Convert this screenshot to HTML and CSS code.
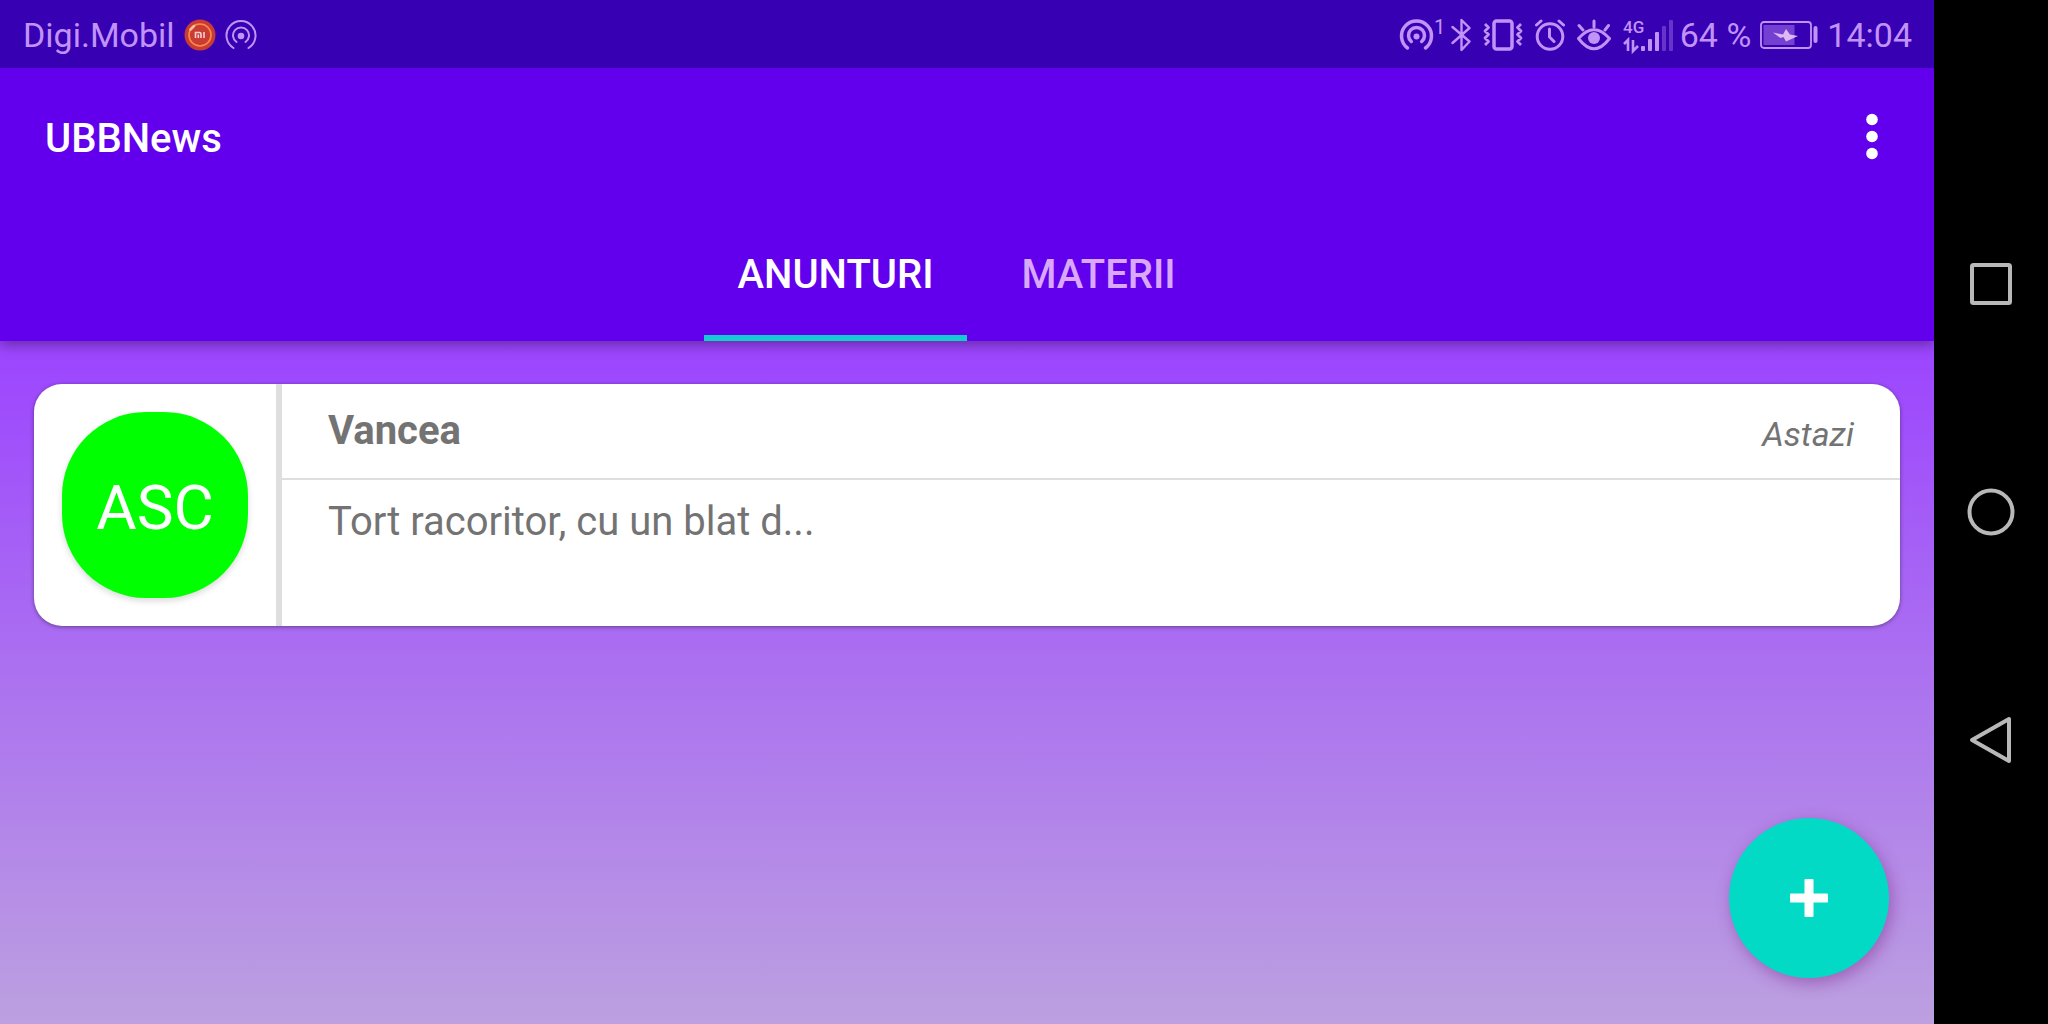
FILE: index.html
```html
<!DOCTYPE html>
<html lang="ro">
<head>
<meta charset="utf-8">
<meta name="viewport" content="width=device-width, initial-scale=1">
<title>UBBNews</title>
<link rel="stylesheet" href="styles.css">
</head>
<body>
<div class="screen">
  <div class="status-bar">
    <div class="status-group status-left">
      <span>Digi.Mobil</span>
      <svg class="mi-icon" width="32" height="32" viewBox="0 0 32 32" aria-hidden="true">
        <circle cx="16" cy="16" r="15.5" fill="#c83c35"/>
        <circle cx="16" cy="16" r="11" fill="none" stroke="#ff8a45" stroke-width="1.6"/>
        <path d="M6.500 10.500l3.500-3.500" stroke="#ffc09a" stroke-width="2.500" stroke-linecap="round"/>
        <path d="M11.500 19v-5.500h4q1.500 0 1.500 1.500v4M14.300 15.500V19M20 13v6" fill="none" stroke="#fbd0c8" stroke-width="1.600"/>
      </svg>
      <svg width="32" height="30" viewBox="0 0 32 30" fill="none" stroke="#c193f8" stroke-width="2" stroke-linecap="round" aria-hidden="true">
        <path d="M8.500 28A14.500 14.500 0 1 1 23.500 28M11.500 22A8 8 0 1 1 20.500 22"/>
        <circle cx="16" cy="16" r="3.300" fill="#c193f8" stroke="none"/>
      </svg>
    </div>
    <div class="status-group status-right">
      <svg width="40" height="32" viewBox="0 0 40 32" overflow="visible" fill="none" stroke="#c193f8" stroke-width="3.500" stroke-linecap="round" aria-hidden="true">
        <path d="M8.500 29A15 15 0 1 1 26.500 29M12.300 22.500A8 8 0 1 1 22.700 22.500"/>
        <circle cx="17.500" cy="17.500" r="3" fill="#c193f8" stroke="none"/>
        <text class="tiny-text" x="35" y="15">1</text>
      </svg>
      <svg width="20" height="34" viewBox="0 0 20 34" fill="none" stroke="#c193f8" stroke-width="2.400" stroke-linejoin="round" stroke-linecap="round" aria-hidden="true">
        <path d="M1.500 9L18.500 23.500 10.500 32V2L18.500 10 1.500 25"/>
      </svg>
      <svg width="40" height="32" viewBox="0 0 40 32" fill="none" stroke="#c193f8" stroke-width="3.500" stroke-linejoin="round" aria-hidden="true">
        <rect x="11" y="2" width="18" height="28" rx="2.500"/>
        <path stroke-width="2.800" d="M2 5l3.500 3.500L2 12l3.500 3.500L2 19l3.500 3.500L2 26M38 5l-3.500 3.500L38 12l-3.500 3.500L38 19l-3.500 3.500L38 26"/>
      </svg>
      <svg width="30" height="32" viewBox="0 0 30 32" fill="none" stroke="#c193f8" stroke-width="3" stroke-linecap="round" aria-hidden="true">
        <circle cx="15" cy="17.500" r="12.800"/>
        <path d="M14.500 10v8l4.500 4.500M1.500 6L6 2M28.500 6L24 2"/>
      </svg>
      <svg width="34" height="32" viewBox="0 0 34 32" fill="none" stroke="#c193f8" stroke-width="3" stroke-linecap="round" stroke-linejoin="round" aria-hidden="true">
        <path d="M1.500 19.500Q17 2 32.500 19.500Q17 40 1.500 19.500Z"/>
        <path d="M17 8V2M6 11L2 6.500M28 11L31.500 6.500"/>
        <circle cx="17" cy="19" r="6" fill="#c193f8" stroke="none"/>
      </svg>
      <svg width="50" height="32" viewBox="0 0 50 32" overflow="visible" fill="#c193f8" aria-hidden="true">
        <text class="tiny-text tiny-bold" x="0" y="14">4G</text>
        <path d="M1 25l4-4v11M10 21v11l5-5" fill="none" stroke="#c193f8" stroke-width="2.600"/>
        <rect x="18" y="27" width="4" height="5" rx="1"/>
        <rect x="25" y="20" width="4" height="12" rx="1"/>
        <rect x="32" y="13" width="4" height="19" rx="1"/>
        <rect x="39" y="7" width="4" height="25" rx="1" opacity=".35"/>
        <rect x="46" y="1" width="4" height="31" rx="1" opacity=".35"/>
      </svg>
      <span class="battery">
        <span>64 %</span>
        <svg width="58" height="28" viewBox="0 0 58 28" aria-hidden="true">
          <rect x="1" y="1" width="50" height="26" rx="3" fill="none" stroke="#c193f8" stroke-width="1.800"/>
          <rect x="3.500" y="4" width="31" height="20" fill="#7440d2"/>
          <path d="M13 11.500l10 2 3-5.500 4 5.500 8 1.500-12 5.500-2.500-4.500-3 1z" fill="#dcb9f5"/>
          <rect x="53.500" y="5" width="4" height="17" rx="2" fill="#c193f8"/>
        </svg>
        <span>14:04</span>
      </span>
    </div>
  </div>

  <header class="app-bar">
    <div class="toolbar">
      <h1 class="title">UBBNews</h1>
      <button class="overflow" aria-label="Mai multe">
        <svg width="12" height="48" viewBox="0 0 12 48" fill="#fff"><circle cx="6" cy="6.500" r="5.800"/><circle cx="6" cy="23.500" r="5.800"/><circle cx="6" cy="40.500" r="5.800"/></svg>
      </button>
    </div>
    <div class="tabs" role="tablist">
      <button class="tab tab-active" role="tab" aria-selected="true">ANUNTURI</button>
      <button class="tab" role="tab" aria-selected="false">MATERII</button>
    </div>
  </header>

  <main class="content">
    <article class="card">
      <div class="card-side"><div class="badge">ASC</div></div>
      <div class="card-main">
        <div class="card-head">
          <h2 class="author">Vancea</h2>
          <em class="date">Astazi</em>
        </div>
        <p class="excerpt">Tort racoritor, cu un blat d...</p>
      </div>
    </article>
    <button class="fab" aria-label="Adauga">
      <svg width="38" height="38" viewBox="0 0 38 38" fill="#fff"><rect x="14.500" y="0" width="9" height="38" rx="1"/><rect x="0" y="14.500" width="38" height="9" rx="1"/></svg>
    </button>
  </main>
</div>

<nav class="system-nav">
  <button class="nav-button" aria-label="Recente">
    <svg width="48" height="48" viewBox="0 0 48 48"><rect x="5" y="5" width="38" height="38" rx="1.500"/></svg>
  </button>
  <button class="nav-button" aria-label="Acasa">
    <svg width="48" height="48" viewBox="0 0 48 48"><circle cx="24" cy="24" r="21.500"/></svg>
  </button>
  <button class="nav-button" aria-label="Inapoi">
    <svg width="48" height="48" viewBox="0 0 48 48"><path d="M5 24L42 3V45Z"/></svg>
  </button>
</nav>
</body>
</html>
```
FILE: styles.css
```css
* {
  box-sizing: border-box;
}

body {
  margin: 0;
  min-height: 100vh;
  display: flex;
  background: #000;
  font-family: Roboto, "Noto Sans", sans-serif;
}

button {
  border: 0;
  padding: 0;
  background: none;
  font: inherit;
  cursor: pointer;
}

svg {
  display: block;
  flex: none;
}

.screen {
  flex: 1;
  min-width: 0;
  display: flex;
  flex-direction: column;
}

/* Status bar */

.status-bar {
  display: flex;
  justify-content: space-between;
  height: 68px;
  padding: 2px 22px 0 23px;
  background: #3700b3;
  color: #c193f8;
  font-size: 34px;
  line-height: 40px;
  white-space: nowrap;
}

.status-group,
.battery {
  display: flex;
  align-items: center;
}

.status-left {
  gap: 9px;
}

.status-right {
  gap: 12px;
}

.battery {
  gap: 9px;
  margin-left: -5px;
}

.tiny-text {
  fill: #c193f8;
  stroke: none;
  font-size: 20px;
}

.tiny-bold {
  font-size: 17px;
  font-weight: 500;
}

/* App bar */

.app-bar {
  position: relative;
  background: #6200ee;
  color: #fff;
  box-shadow: 0 4px 12px rgba(0, 0, 0, 0.35);
  clip-path: inset(0 0 -24px 0);
}

.toolbar {
  display: flex;
  align-items: center;
  justify-content: space-between;
  height: 138px;
  padding: 0 39px 0 45px;
}

.title {
  margin: 0;
  padding-top: 3px;
  font-size: 40px;
  font-weight: 500;
  line-height: 48px;
}

.overflow {
  width: 46px;
  height: 96px;
  display: flex;
  align-items: center;
  justify-content: center;
}

.tabs {
  display: flex;
  justify-content: center;
}

.tab {
  width: 263px;
  height: 135px;
  border-top: 8px solid transparent;
  border-bottom: 6px solid transparent;
  color: #d9a8fb;
  font-size: 40px;
  font-weight: 500;
}

.tab-active {
  border-bottom-color: #14cbd2;
  color: #fff;
}

/* Announcements */

.content {
  flex: 1;
  display: flex;
  flex-direction: column;
  justify-content: space-between;
  gap: 40px;
  padding: 43px 34px 46px;
  background: linear-gradient(#9c44ff, #bca0e0);
}

.card {
  display: flex;
  min-height: 242px;
  border-radius: 28px;
  overflow: hidden;
  background: #fff;
  color: #737373;
  box-shadow: 0 1px 4px rgba(0, 0, 0, 0.4);
}

.card-side {
  display: flex;
  align-items: center;
  padding: 0 28px;
  border-right: 6px solid #dedede;
}

.badge {
  width: 186px;
  height: 186px;
  padding-top: 3px;
  border-radius: 84px;
  background: #0f0;
  color: #fff;
  font-size: 62px;
  line-height: 186px;
  text-align: center;
  box-shadow: 0 3px 6px rgba(0, 0, 0, 0.15);
}

.card-main {
  flex: 1;
  min-width: 0;
}

.card-head {
  display: flex;
  align-items: center;
  justify-content: space-between;
  height: 96px;
  padding: 0 46px;
  border-bottom: 2px solid #dedede;
}

.author {
  margin: 0;
  font-size: 40px;
  font-weight: 700;
  line-height: 48px;
}

.date {
  padding-top: 5px;
  font-size: 34px;
  line-height: 40px;
}

.excerpt {
  margin: 0;
  padding: 18px 46px;
  font-size: 40px;
  line-height: 48px;
}

.fab {
  align-self: flex-end;
  display: flex;
  align-items: center;
  justify-content: center;
  width: 160px;
  height: 160px;
  margin-right: 11px;
  border-radius: 50%;
  background: #03dac6;
  box-shadow: 3px 5px 16px rgba(120, 30, 130, 0.45);
}

/* System navigation */

.system-nav {
  width: 114px;
  display: flex;
  flex-direction: column;
  justify-content: center;
}

.nav-button {
  display: flex;
  align-items: center;
  justify-content: center;
  height: 228px;
  fill: none;
  stroke: #b8b8b8;
  stroke-width: 4;
  stroke-linejoin: round;
}
```
